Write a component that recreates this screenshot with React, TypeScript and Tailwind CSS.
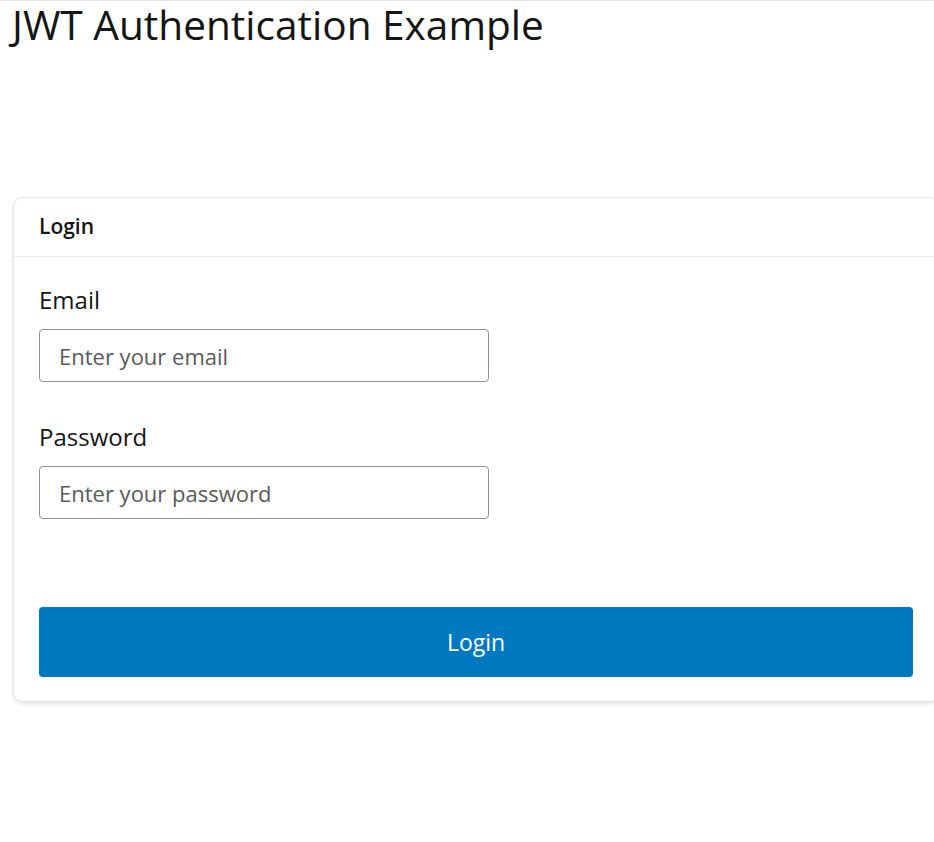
export default function App() {
  return (
    <div className="min-h-[842px] bg-white border-t border-[#e3e3e3] font-['Open_Sans',sans-serif] text-[#151515]">
      <h1 className="pl-[12px] text-[40.6px] leading-[48px]">JWT Authentication Example</h1>
      <div className="ml-[13px] mt-[148px] w-[926px] rounded-[10px] border border-[#e6e6e6] bg-white shadow-[0_2px_4px_rgba(0,0,0,0.12)]">
        <div className="h-[59px] flex items-center px-[25px] border-b border-[#ececec]">
          <h2 className="text-[21px] font-semibold">Login</h2>
        </div>
        <form className="px-[25px] pt-[27px] pb-[24px] w-[900px]">
          <div className="flex flex-col">
            <label className="text-[24px] leading-[32px]">Email</label>
            <input
              type="email"
              placeholder="Enter your email"
              className="mt-[13px] w-[450px] h-[53px] rounded-[4px] border border-[#8a939c] px-[19px] text-[22px] placeholder:text-[#5a5a5a] outline-none"
            />
          </div>
          <div className="flex flex-col mt-[39px]">
            <label className="text-[24px] leading-[32px]">Password</label>
            <input
              type="password"
              placeholder="Enter your password"
              className="mt-[13px] w-[450px] h-[53px] rounded-[4px] border border-[#8a939c] px-[19px] text-[22px] placeholder:text-[#5a5a5a] outline-none"
            />
          </div>
          <button
            type="submit"
            className="mt-[88px] w-[874px] h-[70px] rounded-[4px] bg-[#0079c1] text-white text-[23px]"
          >
            Login
          </button>
        </form>
      </div>
    </div>
  );
}
